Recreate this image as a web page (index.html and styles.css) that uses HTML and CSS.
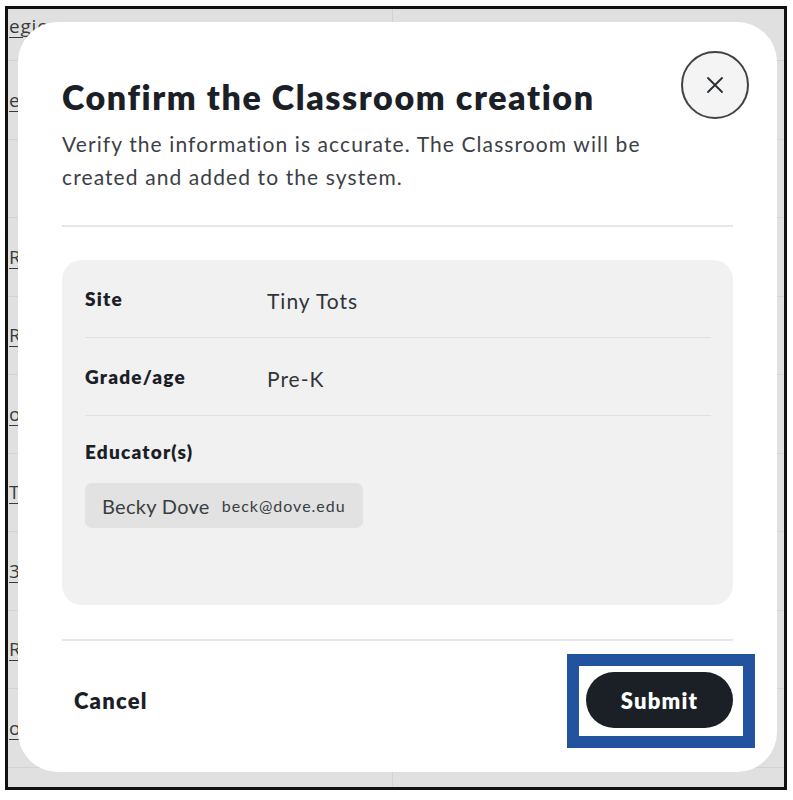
FILE: index.html
```html
<!DOCTYPE html>
<html lang="en">
<head>
<meta charset="utf-8">
<title>Confirm the Classroom creation</title>
<link rel="stylesheet" href="styles.css">
</head>
<body>
<div class="frame">
  <div class="table">
    <div class="row head"><div class="cell"><span class="link">egion</span></div><div class="cell"></div></div>
    <div class="row"><div class="cell"><span class="link">east</span></div><div class="cell"></div></div>
    <div class="row"><div class="cell"></div><div class="cell"></div></div>
    <div class="row"><div class="cell"><span class="link">Room</span></div><div class="cell"></div></div>
    <div class="row"><div class="cell"><span class="link">Room</span></div><div class="cell"></div></div>
    <div class="row"><div class="cell"><span class="link">oak</span></div><div class="cell"></div></div>
    <div class="row"><div class="cell"><span class="link">Teal</span></div><div class="cell"></div></div>
    <div class="row"><div class="cell"><span class="link">3rd</span></div><div class="cell"></div></div>
    <div class="row"><div class="cell"><span class="link">RI</span></div><div class="cell"></div></div>
    <div class="row"><div class="cell"><span class="link">ol</span></div><div class="cell"></div></div>
    <div class="row"><div class="cell"></div><div class="cell"></div></div>
  </div>

  <div class="modal" role="dialog" aria-labelledby="dlg-title">
    <div class="modal-head">
      <div class="head-text">
        <h1 id="dlg-title" class="title">Confirm the Classroom creation</h1>
        <p class="desc">Verify the information is accurate. The Classroom will be created and added to the system.</p>
      </div>
      <button class="close" aria-label="Close">
        <svg width="18" height="18" viewBox="0 0 18 18" aria-hidden="true"><path d="M2 2 L16 16 M16 2 L2 16" stroke="#2a2d31" stroke-width="1.8" stroke-linecap="round" fill="none"/></svg>
      </button>
    </div>
    <hr class="divider top-div">
    <div class="card">
      <div class="info-row">
        <div class="label">Site</div>
        <div class="value">Tiny Tots</div>
      </div>
      <div class="info-row">
        <div class="label">Grade/age</div>
        <div class="value">Pre-K</div>
      </div>
      <div class="edu">
        <div class="label">Educator(s)</div>
        <div class="chip"><span class="chip-name">Becky Dove</span><span class="chip-mail">beck@dove.edu</span></div>
      </div>
    </div>
    <hr class="divider foot-div">
    <div class="footer">
      <button class="cancel">Cancel</button>
      <span class="highlight"><button class="submit">Submit</button></span>
    </div>
  </div>
</div>
</body>
</html>
```

FILE: styles.css
```css
* { box-sizing: border-box; }
html, body { margin: 0; padding: 0; background: #ffffff; }

.frame {
  position: relative;
  margin: 6px 0 0 5px;
  width: 782px;
  height: 784px;
  border: 3px solid #111111;
  overflow: hidden;
  background: #e0e0e0;
  font-family: "Lato", "Open Sans", sans-serif;
}

.table { display: flex; flex-direction: column; }
.row {
  display: grid;
  grid-template-columns: 385px 1fr;
  height: 78.5px;
  border-bottom: 1px solid #d3d3d3;
}
.row.head { height: 52px; }
.row.head .cell { align-items: flex-start; padding-top: 4px; }
.cell {
  display: flex;
  align-items: center;
  padding-left: 1px;
  border-right: 1px solid #d3d3d3;
  font-family: "Open Sans", sans-serif;
  font-size: 19px;
  letter-spacing: 0.8px;
  color: #3a3a3a;
}
.cell:last-child { border-right: none; }
.link { text-decoration: underline; text-underline-offset: 4px; text-decoration-thickness: 1px; }

.modal {
  position: absolute;
  left: 10px;
  top: 13px;
  width: 759px;
  height: 750px;
  background: #ffffff;
  border-radius: 40px;
  padding: 29px 44px 0 44px;
  display: flex;
  flex-direction: column;
}

.modal-head { display: flex; align-items: flex-start; justify-content: space-between; gap: 16px; }
.head-text { padding-top: 26px; }
.title {
  margin: 0;
  font-family: "Lato", sans-serif;
  font-weight: 800;
  font-size: 34px;
  line-height: 40px;
  color: #1b2027;
  letter-spacing: 1.6px;
  white-space: nowrap;
}
.desc {
  margin: 10px 0 0 0;
  font-family: "Lato", sans-serif;
  font-size: 21px;
  line-height: 33px;
  color: #3b4046;
  letter-spacing: 1.1px;
  max-width: 600px;
}
.close {
  flex: none;
  width: 68px;
  height: 68px;
  margin-right: -16px;
  border-radius: 50%;
  border: 2px solid #3f4246;
  background: #f4f4f4;
  display: flex;
  align-items: center;
  justify-content: center;
  padding: 0;
}

.divider { border: none; height: 2px; background: #e6e6e6; margin: 0; }
.top-div { margin-top: 32px; }

.card {
  margin-top: 33px;
  background: #f1f1f1;
  border-radius: 20px;
  padding: 0 22px 77px 23px;
}
.info-row {
  display: flex;
  align-items: center;
  height: 78px;
  border-bottom: 1px solid #e1e1e1;
}
.label {
  width: 182px;
  flex: none;
  font-family: "Lato", sans-serif;
  font-weight: 800;
  font-size: 19px;
  line-height: 24px;
  letter-spacing: 1.2px;
  color: #1b2027;
}
.value {
  font-family: "Lato", sans-serif;
  font-size: 21px;
  color: #30343a;
  letter-spacing: 1px;
  padding-top: 3px;
}
.edu { padding-top: 24px; }
.chip {
  margin-top: 19px;
  display: inline-flex;
  align-items: center;
  gap: 12px;
  height: 45px;
  padding: 0 17px;
  background: #e2e2e2;
  border-radius: 7px;
  color: #3a3d42;
}
.chip-name { font-size: 20px; letter-spacing: 0.3px; }
.chip-mail { font-size: 16px; letter-spacing: 1px; }

.foot-div { margin-top: 34px; }

.footer {
  display: flex;
  align-items: center;
  justify-content: space-between;
  padding-top: 31px;
}
.cancel {
  border: none;
  background: none;
  padding: 0 12px;
  font-family: "Lato", sans-serif;
  font-weight: 800;
  font-size: 22px;
  letter-spacing: 1.2px;
  color: #1b2027;
  height: 56px;
}
.highlight {
  display: inline-block;
  border: 12px solid #23529e;
  padding: 6px 10px 8px 7px;
  margin: -18px -22px -20px -19px;
  line-height: 0;
}
.submit {
  width: 147px;
  height: 56px;
  border: none;
  border-radius: 28px;
  background: #1b1f26;
  color: #ffffff;
  font-family: "Lato", sans-serif;
  font-weight: 800;
  font-size: 22px;
  letter-spacing: 1.2px;
}
```
